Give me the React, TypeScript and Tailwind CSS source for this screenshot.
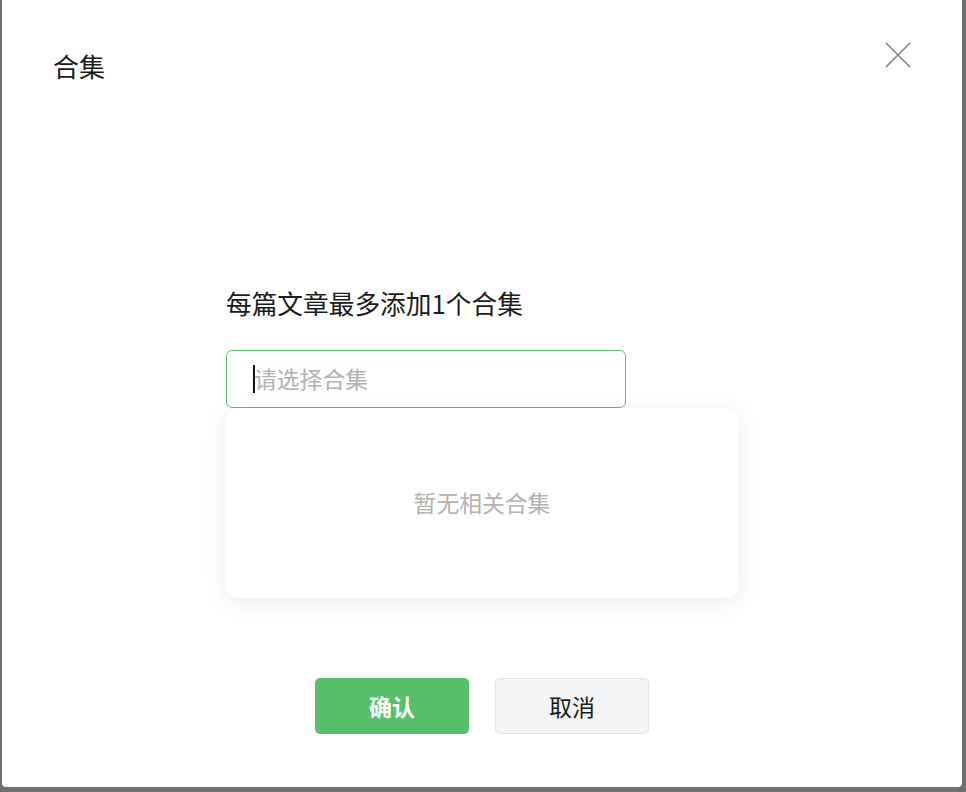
import React from "react";

export default function App() {
  const font = { fontFamily: '"Noto Sans CJK SC", "Noto Sans", sans-serif' };
  return (
    <div className="w-[966px] h-[792px] bg-[#707070] overflow-hidden" style={font}>
      <div className="relative ml-[2px] w-[960px] h-[787px] bg-white rounded-b-[4px] flex flex-col">
        <div className="flex items-start justify-between pl-[51px] pr-[51px] pt-[42px]">
          <div className="mt-[6px] text-[26px] leading-[36px] text-[#1a1a1a]">合集</div>
          <button className="w-[26px] h-[26px] text-[#808080]">
            <svg viewBox="0 0 26 26" width="26" height="26" fill="none" stroke="currentColor" strokeWidth="1.6">
              <path d="M1 1 L25 25 M25 1 L1 25" />
            </svg>
          </button>
        </div>
        <div className="flex-1 flex flex-col items-center">
          <div className="relative w-[512px] mt-[201px]">
            <div className="text-[25.7px] leading-[36px] text-[#1a1a1a]">每篇文章最多添加1个合集</div>
            <div className="mt-[29px] w-[400px] h-[58px] border border-[#5ec06f] rounded-[6px] flex items-center pl-[26px]">
              <span className="w-[2px] h-[28px] bg-[#111]" />
              <span className="-ml-[1px] text-[22.8px] text-[#b2b2b2]">请选择合集</span>
            </div>
            <div className="absolute left-0 top-[123px] w-[512px] h-[190px] bg-white rounded-[12px] shadow-[0_4px_24px_rgba(0,0,0,0.08)] flex items-center justify-center">
              <span className="text-[22.8px] text-[#b2b2b2]">暂无相关合集</span>
            </div>
          </div>
        </div>
        <div className="flex justify-center gap-[26px] pb-[53px]">
          <button className="w-[154px] h-[56px] rounded-[5px] bg-[#57be6a] text-white text-[23px] font-bold">确认</button>
          <button className="w-[154px] h-[56px] rounded-[5px] bg-[#f4f5f7] border border-[#e2e3e5] text-[#1a1a1a] text-[23px]">取消</button>
        </div>
      </div>
    </div>
  );
}
